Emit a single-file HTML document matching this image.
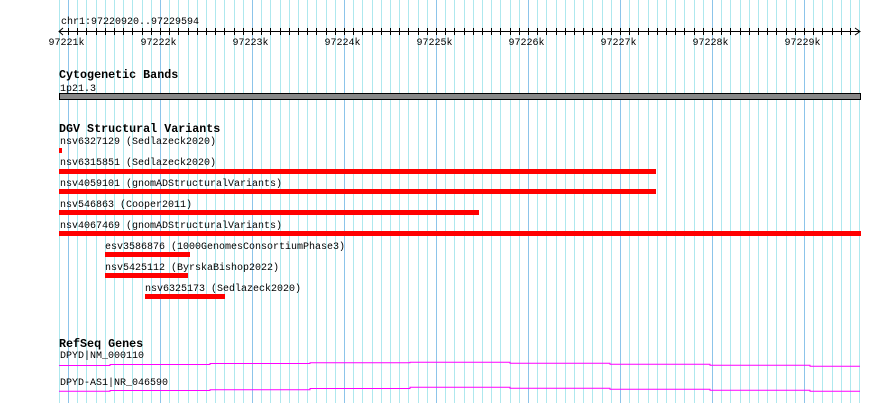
<!DOCTYPE html>
<html><head><meta charset="utf-8"><style>
html,body{margin:0;padding:0;background:#fff;width:890px;height:403px;overflow:hidden}
svg{display:block}
text{font-family:"Liberation Mono",monospace;font-size:10px;fill:#000}
.b{font-weight:bold;font-size:11.7px}
</style></head><body>
<svg width="890" height="403" xmlns="http://www.w3.org/2000/svg">
<defs>
<pattern id="gp" x="68" y="0" width="92" height="403" patternUnits="userSpaceOnUse">
<rect x="0" y="0" width="1" height="403" fill="#8cc4ea"/>
<rect x="9" y="0" width="1" height="403" fill="#aee8ee"/>
<rect x="18" y="0" width="1" height="403" fill="#aee8ee"/>
<rect x="28" y="0" width="1" height="403" fill="#aee8ee"/>
<rect x="37" y="0" width="1" height="403" fill="#aee8ee"/>
<rect x="46" y="0" width="1" height="403" fill="#aee8ee"/>
<rect x="55" y="0" width="1" height="403" fill="#aee8ee"/>
<rect x="64" y="0" width="1" height="403" fill="#aee8ee"/>
<rect x="74" y="0" width="1" height="403" fill="#aee8ee"/>
<rect x="83" y="0" width="1" height="403" fill="#aee8ee"/>
</pattern>
<pattern id="tp" x="68" y="0" width="92" height="40" patternUnits="userSpaceOnUse">
<rect x="0" y="28" width="1" height="7" fill="#000"/>
<rect x="9" y="28" width="1" height="7" fill="#000"/>
<rect x="18" y="28" width="1" height="7" fill="#000"/>
<rect x="28" y="28" width="1" height="7" fill="#000"/>
<rect x="37" y="28" width="1" height="7" fill="#000"/>
<rect x="46" y="28" width="1" height="7" fill="#000"/>
<rect x="55" y="28" width="1" height="7" fill="#000"/>
<rect x="64" y="28" width="1" height="7" fill="#000"/>
<rect x="74" y="28" width="1" height="7" fill="#000"/>
<rect x="83" y="28" width="1" height="7" fill="#000"/>
</pattern>
</defs>
<rect x="59" y="0" width="1" height="403" fill="#aee8ee"/>
<rect x="60" y="0" width="801" height="403" fill="url(#gp)"/>
<!-- ruler -->
<text x="61" y="24">chr1:97220920..97229594</text>
<line x1="59" y1="31.5" x2="860" y2="31.5" stroke="#000"/>
<polyline points="63,28 59,31.5 63,35" fill="none" stroke="#000"/>
<polyline points="855,28 860,31.5 855,35" fill="none" stroke="#000"/>
<rect x="60" y="0" width="796" height="40" fill="url(#tp)"/>
<g text-anchor="middle">
<text x="66.5" y="45">97221k</text>
<text x="158.5" y="45">97222k</text>
<text x="250.5" y="45">97223k</text>
<text x="342.5" y="45">97224k</text>
<text x="434.5" y="45">97225k</text>
<text x="526.5" y="45">97226k</text>
<text x="618.5" y="45">97227k</text>
<text x="710.5" y="45">97228k</text>
<text x="802.5" y="45">97229k</text>
</g>
<!-- cytobands -->
<text class="b" x="59" y="78">Cytogenetic Bands</text>
<text x="60" y="91">1p21.3</text>
<rect x="59.5" y="93.5" width="801" height="6" fill="#888" stroke="#000"/>
<!-- DGV -->
<text class="b" x="59" y="132">DGV Structural Variants</text>
<text x="60" y="144">nsv6327129 (Sedlazeck2020)</text>
<rect x="59" y="148" width="3" height="5" fill="#f00"/>
<text x="60" y="165">nsv6315851 (Sedlazeck2020)</text>
<rect x="59" y="169" width="597" height="5" fill="#f00"/>
<text x="60" y="186">nsv4059101 (gnomADStructuralVariants)</text>
<rect x="59" y="189" width="597" height="5" fill="#f00"/>
<text x="60" y="207">nsv546863 (Cooper2011)</text>
<rect x="59" y="210" width="420" height="5" fill="#f00"/>
<text x="60" y="228">nsv4067469 (gnomADStructuralVariants)</text>
<rect x="59" y="231" width="802" height="5" fill="#f00"/>
<text x="105" y="249">esv3586876 (1000GenomesConsortiumPhase3)</text>
<rect x="105" y="252" width="85" height="5" fill="#f00"/>
<text x="105" y="270">nsv5425112 (ByrskaBishop2022)</text>
<rect x="105" y="273" width="83" height="5" fill="#f00"/>
<text x="145" y="291">nsv6325173 (Sedlazeck2020)</text>
<rect x="145" y="294" width="80" height="5" fill="#f00"/>
<!-- RefSeq -->
<text class="b" x="59" y="347">RefSeq Genes</text>
<text x="60" y="358">DPYD|NM_000110</text>
<polyline fill="none" stroke="#f0f" stroke-width="1" points="59,365.5 110,365.5 110,364.5 210,364.5 210,363.5 310,363.5 310,362.8 410,362.8 410,362.3 510,362.3 510,363.3 610,363.3 610,364.3 710,364.3 710,365.3 810,365.3 810,366.3 860,366.3"/>
<text x="60" y="385">DPYD-AS1|NR_046590</text>
<polyline fill="none" stroke="#f0f" stroke-width="1" points="59,391.3 110,391.3 110,390.5 210,390.5 210,389.7 310,389.7 310,388.5 410,388.5 410,387.3 510,387.3 510,388.3 610,388.3 610,389.3 710,389.3 710,390.3 810,390.3 810,391.3 860,391.3"/>
</svg>
</body></html>
